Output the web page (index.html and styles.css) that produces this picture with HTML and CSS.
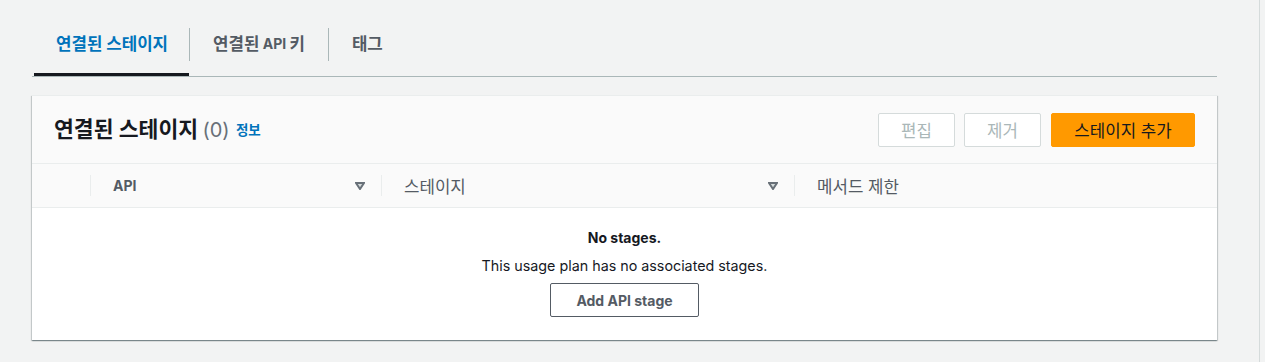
FILE: index.html
```html
<!DOCTYPE html>
<html lang="ko">
<head>
    <meta charset="UTF-8">
    <title>사용량 계획 - 연결된 스테이지</title>
    <link rel="stylesheet" href="styles.css">
</head>
<body>
    <div id="page">
        <div class="tabs">
            <div class="tab active"><span class="ko">연결된 스테이지</span></div>
            <span class="tab-sep"></span>
            <div class="tab"><span class="ko">연결된</span>&nbsp;API&nbsp;<span class="ko">키</span></div>
            <span class="tab-sep"></span>
            <div class="tab"><span class="ko">태그</span></div>
        </div>

        <div class="card">
            <div class="card-header">
                <h2 class="card-title"><span class="ko">연결된 스테이지</span> <span class="count">(0)</span> <a href="#" class="info-link ko">정보</a></h2>
                <div class="actions">
                    <button class="btn ko-btn" disabled>편집</button>
                    <button class="btn ko-btn" disabled>제거</button>
                    <button class="btn ko-btn primary">스테이지 추가</button>
                </div>
            </div>
            <div class="table-head">
                <div class="col col-select"></div>
                <div class="col col-api">
                    <span class="th-label latin">API</span>
                    <svg class="sort-icon" width="10" height="8" viewBox="0 0 10 8"><polygon points="1,1 9,1 5,7" fill="#d5dbdb" stroke="#687078" stroke-width="2"/></svg>
                </div>
                <div class="col col-stage">
                    <span class="th-label ko">스테이지</span>
                    <svg class="sort-icon" width="10" height="8" viewBox="0 0 10 8"><polygon points="1,1 9,1 5,7" fill="#d5dbdb" stroke="#687078" stroke-width="2"/></svg>
                </div>
                <div class="col col-method">
                    <span class="th-label ko">메서드 제한</span>
                </div>
            </div>
            <div class="empty">
                <b class="empty-title">No stages.</b>
                <p class="empty-text">This usage plan has no associated stages.</p>
                <button class="btn outline">Add API stage</button>
            </div>
        </div>
    </div>
</body>
</html>
```

FILE: styles.css
```css
body {
    margin: 0;
    background-color: #f2f3f3;
    font-family: Inter, "Noto Sans CJK KR", sans-serif;
    font-size: 14px;
    color: #16191f;
}
/* hangul in the original renders about a fifth larger than the latin text */
.ko {
    font-size: 1.2em;
}
#page {
    width: 1260px;
    min-height: 362px;
    border-right: 1px solid #d5dbdb;
    padding: 20px 0 0 32px;
    box-sizing: border-box;
}
.tabs {
    display: flex;
    width: 1185px;
    border-bottom: 1px solid #aab7b8;
}
.tab {
    display: flex;
    align-items: center;
    height: 56px;
    padding: 0 23px 6px 23px;
    border-bottom: 3px solid transparent;
    box-sizing: border-box;
    line-height: 20px;
    color: #545b64;
    font-weight: 700;
    cursor: pointer;
}
.tab:first-child {
    margin-left: 2px;
    padding-left: 22px;
    padding-right: 21px;
}
.tab.active {
    color: #0073bb;
    border-bottom-color: #16191f;
}
.tab-sep {
    width: 1px;
    height: 33px;
    margin-top: 8px;
    background-color: #aab7b8;
}
.card {
    width: 1185px;
    margin-top: 18px;
    background-color: #fff;
    box-shadow: 0 1px 1px 0 rgba(0, 28, 36, 0.3), 1px 1px 1px 0 rgba(0, 28, 36, 0.15), -1px 1px 1px 0 rgba(0, 28, 36, 0.15);
    border-top: 1px solid #eaeded;
}
.card-header {
    display: flex;
    align-items: center;
    justify-content: space-between;
    height: 68px;
    box-sizing: border-box;
    padding: 0 22px;
    background-color: #fafafa;
    border-bottom: 1px solid #eaeded;
}
.card-title {
    margin: 0;
    font-size: 18px;
    font-weight: 700;
    line-height: 26px;
}
.count {
    font-size: 20px;
    font-weight: 400;
    color: #687078;
}
.info-link {
    margin-left: 2px;
    font-size: 13.5px;
    font-weight: 700;
    color: #0073bb;
    text-decoration: none;
    vertical-align: 2px;
}
.actions {
    display: flex;
    gap: 9px;
}
.btn {
    height: 34px;
    padding: 0 20px;
    font-family: Inter, "Noto Sans CJK KR", sans-serif;
    font-size: 14px;
    border-radius: 2px;
    border: 1px solid #545b64;
    background-color: #fff;
    color: #545b64;
    cursor: pointer;
}
.ko-btn {
    font-size: 16.8px;
}
.btn:disabled {
    width: 77px;
    border-color: #d5dbdb;
    color: #aab7b8;
    cursor: default;
}
.btn.primary {
    width: 144px;
    margin-left: 1px;
    border-color: #ff9900;
    background-color: #ff9900;
    color: #16191f;
}
.btn.outline {
    width: 149px;
    margin-top: 6px;
    font-weight: 700;
}
.table-head {
    display: flex;
    height: 43px;
    align-items: center;
    background-color: #fafafa;
    border-bottom: 1px solid #eaeded;
}
.col {
    display: flex;
    align-items: center;
    justify-content: space-between;
    height: 21px;
    box-sizing: border-box;
    padding: 0 16px 0 22px;
    border-left: 1px solid #eaeded;
    color: #545b64;
}
.col-select {
    width: 58px;
    border-left: none;
}
.col-api {
    width: 291px;
}
.col-stage {
    width: 413px;
}
.col-method {
    flex: 1;
}
.th-label.latin {
    font-weight: 700;
}
.sort-icon {
    margin-top: 1px;
}
.empty {
    display: flex;
    flex-direction: column;
    align-items: center;
    padding: 19px 0 23px;
    line-height: 22px;
}
.empty-title {
    font-weight: 700;
}
.empty-text {
    margin: 6px 0 0;
    font-size: 14.3px;
}
```
